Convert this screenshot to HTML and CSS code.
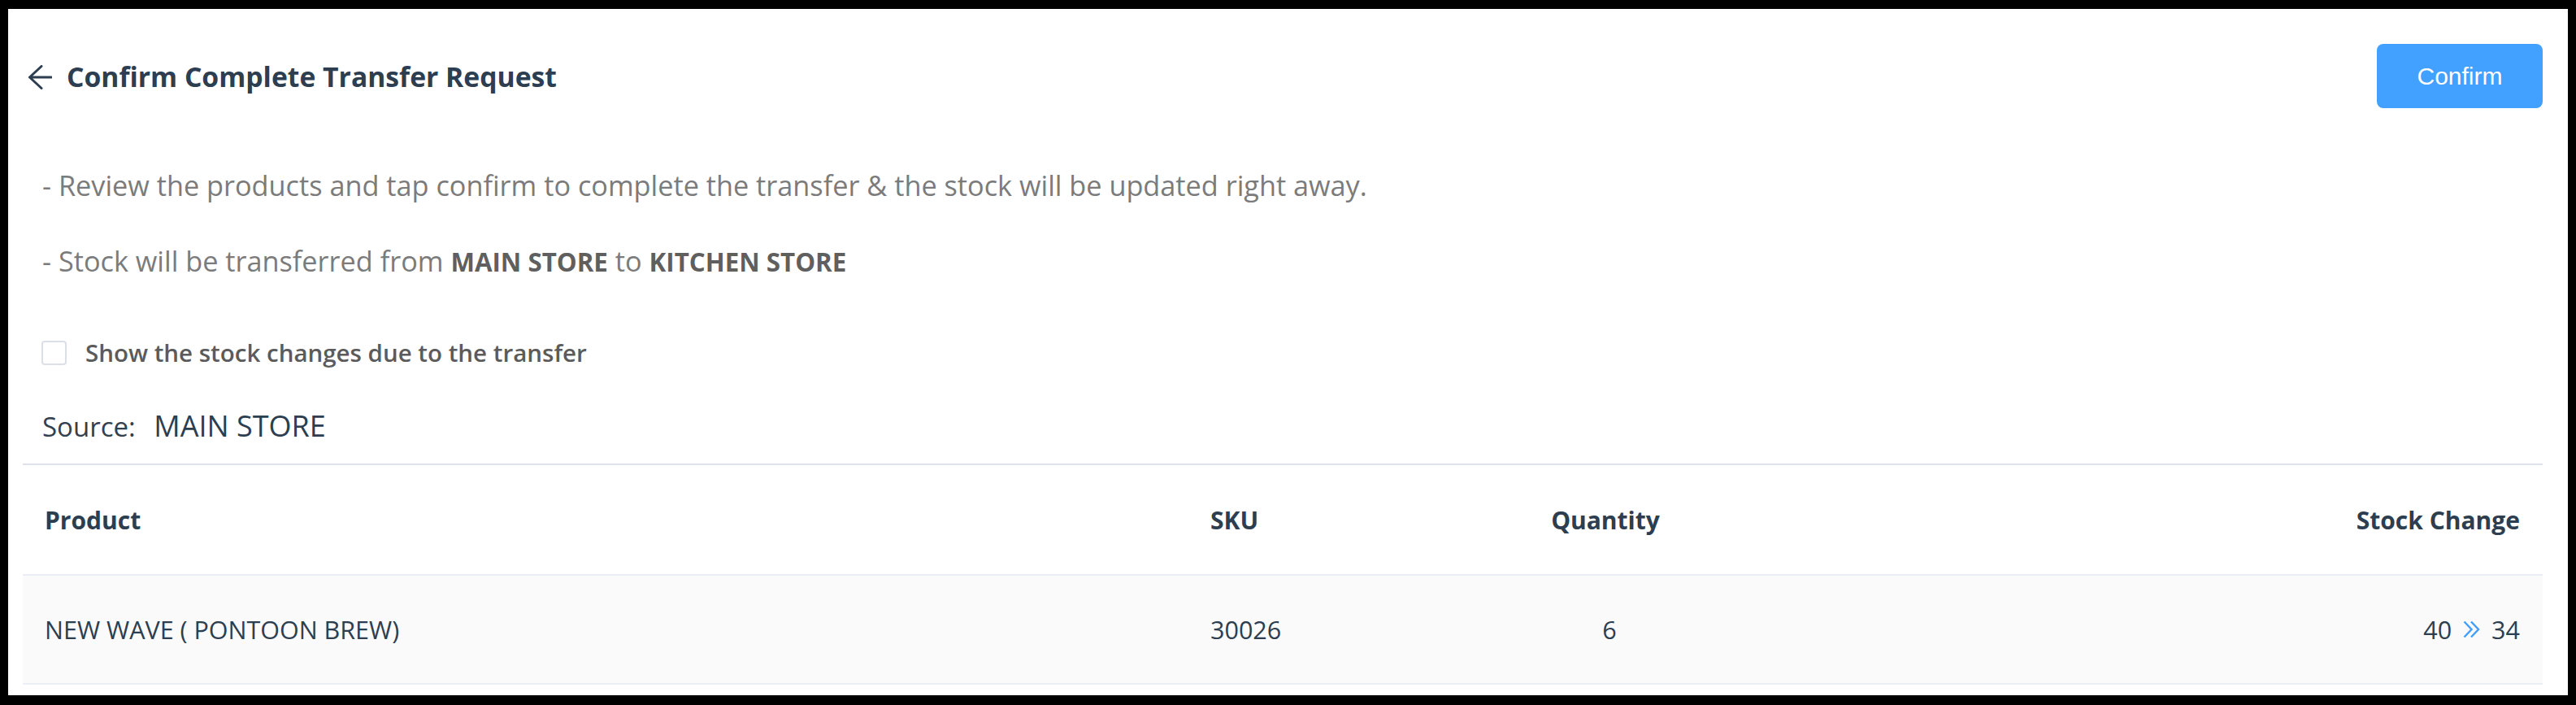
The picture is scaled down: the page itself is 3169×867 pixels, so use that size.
FILE: index.html
```html
<!DOCTYPE html>
<html lang="en">
<head>
<meta charset="utf-8">
<title>Confirm Complete Transfer Request</title>
<link rel="stylesheet" href="styles.css">
</head>
<body>
<div class="frame">
  <header class="topbar">
    <div class="title-wrap">
      <svg class="back" width="30" height="30" viewBox="0 0 30 30" aria-hidden="true">
        <path d="M29 15 H2.5 M17 1.5 L2.5 15 L17 28.5" fill="none" stroke="#2c3e50" stroke-width="3" stroke-linecap="round" stroke-linejoin="round"/>
      </svg>
      <h1 class="title">Confirm Complete Transfer Request</h1>
    </div>
    <button class="btn-confirm" type="button">Confirm</button>
  </header>

  <div class="notes">
    <p>- Review the products and tap confirm to complete the transfer &amp; the stock will be updated right away.</p>
    <p>- Stock will be transferred from <b>MAIN STORE</b> to <b>KITCHEN STORE</b></p>
  </div>

  <label class="check-row">
    <span class="box"></span>
    <span class="check-label">Show the stock changes due to the transfer</span>
  </label>

  <div class="source">Source: <span class="source-name">MAIN STORE</span></div>

  <div class="items">
    <div class="row head">
      <div class="cell">Product</div>
      <div class="cell">SKU</div>
      <div class="cell center">Quantity</div>
      <div class="cell right">Stock Change</div>
    </div>
    <div class="row body">
      <div class="cell">NEW WAVE ( PONTOON BREW)</div>
      <div class="cell">30026</div>
      <div class="cell center qty">6</div>
      <div class="cell right change">
        <span>40</span>
        <svg class="dbl" width="21" height="22" viewBox="0 0 21 22" aria-hidden="true">
          <path d="M1.5 1.5 L10.5 11 L1.5 20.5 M10 1.5 L19 11 L10 20.5" fill="none" stroke="#409eff" stroke-width="2.4"/>
        </svg>
        <span>34</span>
      </div>
    </div>
  </div>
</div>
</body>
</html>
```

FILE: styles.css
```css
* { box-sizing: border-box; }

html, body { margin: 0; padding: 0; }

body {
  background: #000;
  padding: 11px 10px 12px 10px;
  font-family: "Open Sans", "Noto Sans", sans-serif;
  color: #2c3e50;
}

.frame {
  background: #fff;
  height: 844px;
  padding: 0 31px 0 18px;
}

.topbar {
  display: flex;
  align-items: center;
  justify-content: space-between;
  padding-top: 43px;
  height: 122px;
}

.title-wrap {
  display: flex;
  align-items: center;
  padding-left: 6px;
}

.back { display: block; margin-right: 18px; margin-top: 3px; }

.title {
  margin: 0;
  font-size: 33.7px;
  font-weight: 700;
  color: #2c3e50;
  line-height: 40px;
}

.btn-confirm {
  width: 204px;
  height: 79px;
  border: 0;
  border-radius: 8px;
  background: #42a0ff;
  color: #fff;
  font-family: "Liberation Sans", Arial, sans-serif;
  font-size: 30px;
  padding: 0;
}

.notes { margin-top: 64px; padding-left: 24px; }

.notes p {
  margin: 0 0 31px;
  font-size: 34.25px;
  line-height: 62px;
  color: #7b7b7b;
}

.notes p:last-child { margin-bottom: 0; }

.notes b { font-weight: 700; font-size: 31.3px; color: #5f5f5f; }

.check-row {
  display: flex;
  align-items: center;
  height: 30px;
  margin-top: 66px;
  padding-left: 23px;
}

.box {
  width: 31px;
  height: 30px;
  border: 2px solid #dcdfe6;
  border-radius: 4px;
  background: #fff;
  margin-right: 23px;
}

.check-label {
  font-size: 29.5px;
  font-weight: 600;
  color: #5b5b5b;
  line-height: 30px;
}

.source {
  margin-top: 55px;
  padding-left: 24px;
  font-size: 33px;
  line-height: 40px;
  color: #33404d;
}

.source-name {
  margin-left: 14px;
  font-size: 36px;
  font-weight: 500;
  color: #2c3e50;
}

.items {
  margin-top: 25px;
  border-top: 2px solid #dfe3e9;
}

.row {
  display: grid;
  grid-template-columns: 1434px 300px 426px 1fr;
  align-items: center;
  border-bottom: 2px solid #ebeef5;
  color: #2c3e50;
}

.row.head { height: 136px; font-size: 30px; font-weight: 700; }
.row.body { height: 134px; font-size: 30.5px; background: #fafafa; }

.cell { padding: 0 28px 0 27px; }
.cell.center { text-align: center; padding: 0; }
.cell.qty { padding-left: 10px; }
.cell.right { text-align: right; }

.change {
  display: flex;
  justify-content: flex-end;
  align-items: center;
  gap: 14px;
}

.dbl { display: block; }
```
